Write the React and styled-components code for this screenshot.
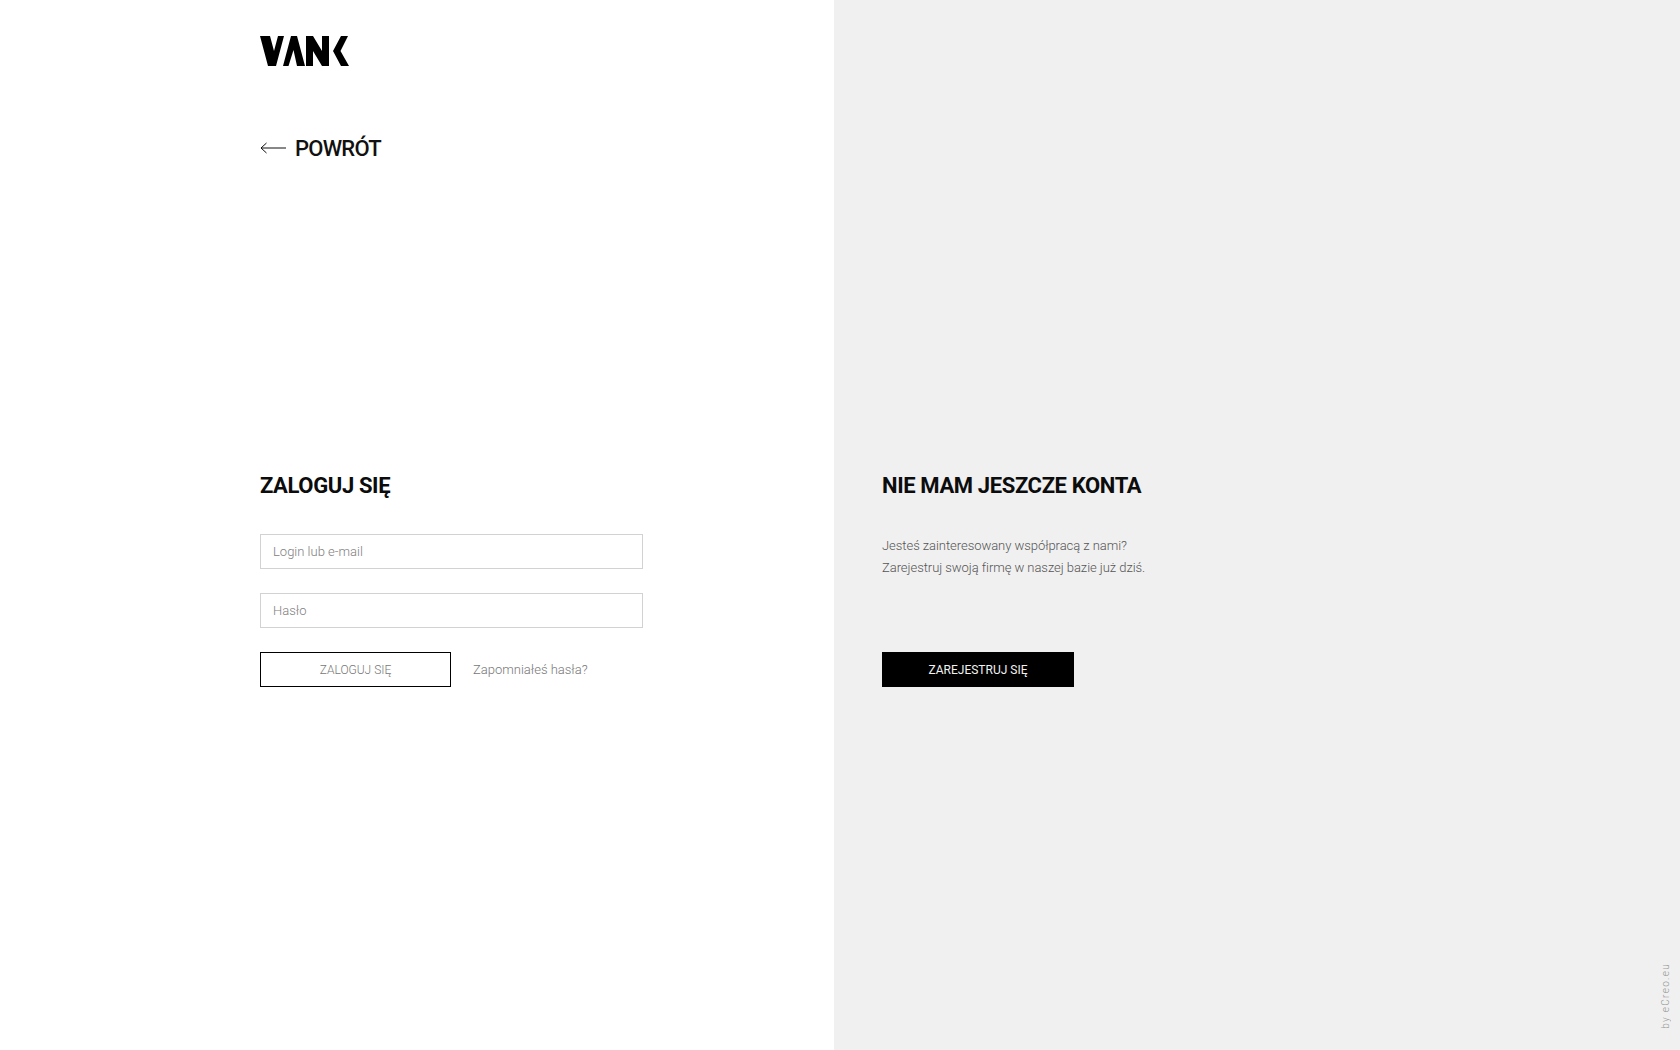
import React from "react";
import styled, { createGlobalStyle } from "styled-components";

const GlobalStyle = createGlobalStyle`
  html, body {
    margin: 0;
    padding: 0;
    background: #fff;
  }
  * {
    box-sizing: border-box;
  }
`;

const Page = styled.div`
  display: grid;
  grid-template-columns: 834px 1fr;
  height: 1050px;
  overflow: hidden;
  position: relative;
  font-family: "Roboto", "Liberation Sans", sans-serif;
`;

const LeftPanel = styled.section`
  background: #fff;
  padding: 36px 0 0 260px;
`;

const RightPanel = styled.section`
  background: #f0f0f0;
  padding: 470px 0 0 48px;
`;

const LogoLink = styled.a`
  display: block;
  width: 90px;
  height: 30px;
`;

const BackLink = styled.a`
  display: flex;
  align-items: center;
  gap: 9px;
  margin-top: 67px;
  height: 30px;
  font-size: 22px;
  font-weight: 500;
  letter-spacing: -0.75px;
  color: #111;
`;

const Heading = styled.h2`
  margin: 0;
  height: 30px;
  font-size: 22px;
  line-height: 32px;
  font-weight: 700;
  letter-spacing: -0.37px;
  color: #0c0c0c;
`;

const LoginForm = styled.form`
  margin-top: 307px;
  width: 383px;
`;

const Field = styled.input`
  display: block;
  width: 100%;
  height: 35px;
  margin-top: 24px;
  padding: 0 12px;
  border: 1px solid #d2d2d2;
  border-radius: 0;
  outline: none;
  background: #fff;
  font-family: inherit;
  font-size: 13px;
  font-weight: 300;
  &::placeholder {
    color: #808080;
    opacity: 1;
  }
`;

const FirstField = styled(Field)`
  margin-top: 34px;
`;

const Actions = styled.div`
  display: flex;
  align-items: center;
  gap: 22px;
  margin-top: 24px;
`;

const Button = styled.button`
  display: block;
  width: ${(p) => (p.$dark ? "192px" : "191px")};
  height: 35px;
  padding: 0;
  border: 1px solid #000;
  border-radius: 0;
  background: ${(p) => (p.$dark ? "#000" : "#fff")};
  color: ${(p) => (p.$dark ? "#f1f1f1" : "#777")};
  font-family: inherit;
  font-size: 12px;
  font-weight: ${(p) => (p.$dark ? 400 : 300)};
`;

const Muted = styled.a`
  font-size: 13px;
  font-weight: 300;
  color: #777;
`;

const Intro = styled.p`
  margin: 35px 0 0;
  font-size: 13px;
  font-weight: 300;
  letter-spacing: -0.05px;
  line-height: 22px;
  color: #555;
`;

const RegisterAction = styled.div`
  margin-top: 73px;
`;

const Credit = styled.span`
  position: absolute;
  right: 9px;
  bottom: 21px;
  writing-mode: vertical-rl;
  transform: rotate(180deg);
  font-size: 10px;
  font-weight: 300;
  letter-spacing: 1.3px;
  color: #999;
`;

const Logo = () => (
  <svg width="90" height="30" viewBox="0 0 90 30" fill="#000">
    <polygon points="0,0 10,0 14,15 18,0 24,0 16,30 8,30" />
    <polygon points="23,30 31,0 37,0 45,30 37,30 33.500,14 28.500,30" />
    <polygon points="46,0 53,0 62,15 62,0 69,0 69,30 62,30 53,15 53,30 46,30" />
    <polygon points="88,0 81,0 73,15 81,30 89,30 80.500,15" />
  </svg>
);

const BackArrow = () => (
  <svg width="26" height="12" viewBox="0 0 26 12" fill="none" stroke="#111" strokeWidth="1">
    <path d="M26 6H1M6.500 1 1 6l5.500 5" />
  </svg>
);

export default function App() {
  return (
    <>
      <GlobalStyle />
      <Page>
        <LeftPanel>
          <LogoLink>
            <Logo />
          </LogoLink>
          <BackLink>
            <BackArrow />
            POWRÓT
          </BackLink>
          <LoginForm>
            <Heading>ZALOGUJ SIĘ</Heading>
            <FirstField placeholder="Login lub e-mail" />
            <Field placeholder="Hasło" />
            <Actions>
              <Button type="button">ZALOGUJ SIĘ</Button>
              <Muted>Zapomniałeś hasła?</Muted>
            </Actions>
          </LoginForm>
        </LeftPanel>
        <RightPanel>
          <Heading>NIE MAM JESZCZE KONTA</Heading>
          <Intro>
            Jesteś zainteresowany współpracą z nami?
            <br />
            Zarejestruj swoją firmę w naszej bazie już dziś.
          </Intro>
          <RegisterAction>
            <Button type="button" $dark>
              ZAREJESTRUJ SIĘ
            </Button>
          </RegisterAction>
        </RightPanel>
        <Credit>by eCreo.eu</Credit>
      </Page>
    </>
  );
}
